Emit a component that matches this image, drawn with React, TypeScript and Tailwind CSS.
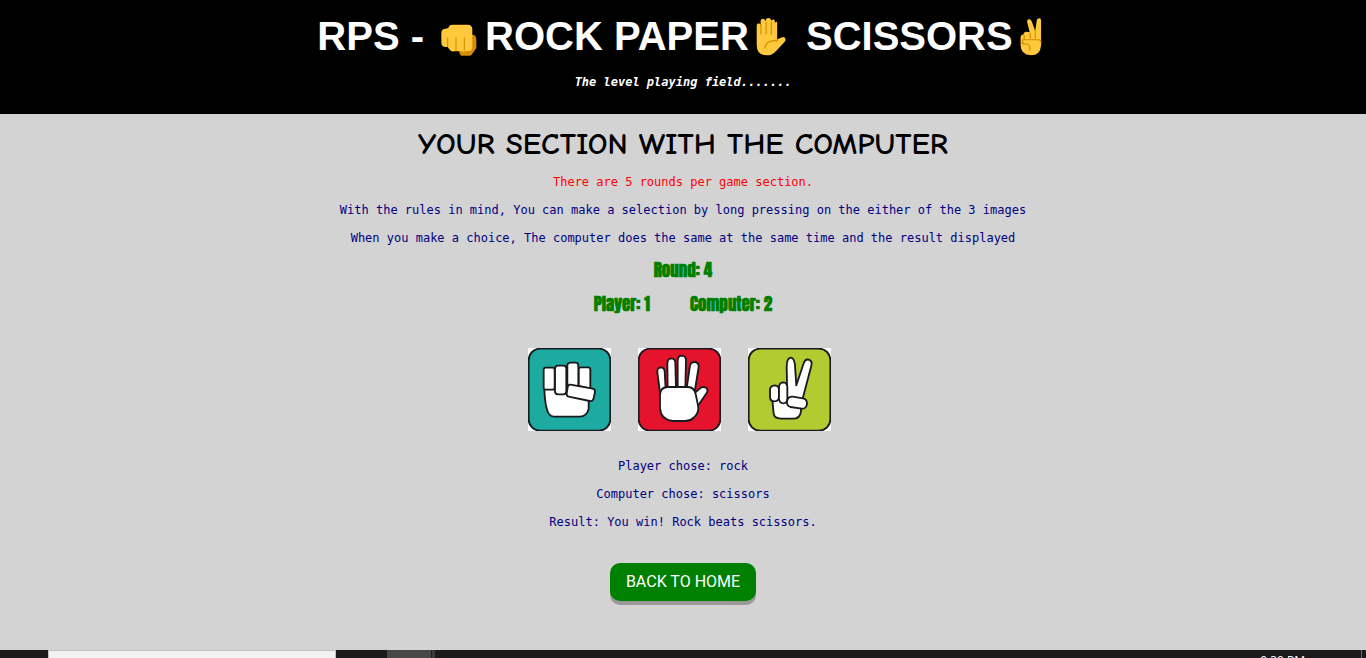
import type { ReactNode } from "react";

function FistEmoji() {
  return (
    <svg viewBox="0 0 108 96" className="mr-2 ml-1.5 inline-block h-8 w-9 align-[-6px]" role="img" aria-label="Fist">
      <path d="M94 32 Q106 32 106 48 V72 L92 92 Q90 95 84 95 H62 Q55 94 55 80 Z" fill="#d48c00" />
      <path d="M22 12 Q24 2 35 2 H80 Q94 2 94 16 V68 Q94 81 84 81 H76 Q70 85 62 82 H40 Q29 84 24 74 L20 69 H14 Q1 68 1 56 V26 Q2 14 14 14 Z" fill="#ffc83d" />
      <path d="M20 40 V69 M45 40 V81 M70 40 V80" stroke="#d48c00" strokeWidth="3" fill="none" />
    </svg>
  );
}

function PalmEmoji() {
  return (
    <svg viewBox="0 0 90 117" className="mr-2 ml-1.5 inline-block h-[38px] w-8 align-[-6px]" role="img" aria-label="Raised hand">
      <path d="M1 24 Q1 16 7 16 Q13 16 13 24 V10 Q13 2 20 2 Q27 2 28 10 Q29 0 37 0 Q45 0 46 10 Q46 4 54 5 Q57 6 57 14 V18 Q58 9 64 12 V66 L77 60 Q85 56 89 63 Q91 69 86 75 L60 102 Q48 115 32 115 Q1 115 1 82 Z" fill="#ffc83d" />
      <path d="M14 20 V51 M30 12 V50 M46 12 V51 M26 94 Q28 68 64 70 V64" stroke="#d48c00" strokeWidth="3.5" fill="none" />
    </svg>
  );
}

function VictoryEmoji() {
  return (
    <svg viewBox="0 0 66 117" className="mx-1.5 inline-block h-[38px] w-6 align-[-6px]" role="img" aria-label="Victory hand">
      <path d="M1 60 Q2 50 10 51 Q10 42 20 42 Q25 42 29 44 L21 12 Q20 5 26 4 Q32 3 35 10 L46 40 L51 6 Q53 0 60 1 Q64 2 64 8 V84 Q62 115 33 115 Q1 113 1 84 Z" fill="#ffc83d" />
      <path d="M31 64 V46 M46 39 V64 M12 52 V66 M8 67 H57 Q64 68 64 76 M8 67 Q3 79 16 80 H23 Q30 82 30 100 M12 80 Q7 81 4 76" stroke="#d48c00" strokeWidth="3.5" fill="none" />
    </svg>
  );
}

function Tile({ label, color, children }: { label: string; color: string; children: ReactNode }) {
  return (
    <button type="button" aria-label={label} className="block cursor-pointer bg-white">
      <svg viewBox="24 24 249 249" className="block size-[83px]" stroke="#171b1e" strokeWidth="5.5" strokeLinejoin="round" strokeLinecap="round">
        <rect x="26" y="26" width="245" height="246" rx="34" fill={color} />
        <g fill="#fff">{children}</g>
      </svg>
    </button>
  );
}

function RockTile() {
  return (
    <Tile label="Rock" color="#1caaa1">
      <path d="M73 145 Q75 205 87 222 Q93 230 102 230 H180 Q200 229 206 207 V150 L142 138 Z" />
      <path d="M176 138 V86 Q177 82 183 82 H204 Q211 82 211 89 V146 Z" />
      <rect x="71" y="83" width="33" height="66" rx="6" />
      <rect x="105" y="77" width="34" height="86" rx="9" />
      <path d="M142 139 V75 Q143 68 151 68 H167 Q175 68 175 76 V139 Z" />
      <path d="M151 134 L218 146 Q226 148 225 156 L220 178 Q217 185 209 183 L146 170 Q139 168 140 160 L143 141 Q145 133 151 134 Z" />
    </Tile>
  );
}

function PaperTile() {
  return (
    <Tile label="Paper" color="#e5142c">
      <path d="M90 158 L82 97 Q81 84 91 82 Q103 82 104 94 L107 148 Z" />
      <path d="M113 145 L112 69 Q113 56 124 55 Q136 56 136 69 L138 145 Z" />
      <path d="M143 145 V61 Q144 47 155 47 Q168 48 168 61 L166 145 Z" />
      <path d="M170 145 L180 76 Q183 65 196 66 Q207 69 206 81 L194 156 Z" />
      <path d="M193 160 L209 146 Q218 138 228 143 Q236 150 230 159 L201 202 Z" />
      <path d="M90 165 Q90 143 112 141 H174 Q193 142 197 162 L204 196 Q209 218 190 234 Q181 243 166 243 H128 Q92 239 90 204 Z" />
    </Tile>
  );
}

function ScissorsTile() {
  return (
    <Tile label="Scissors" color="#b2cb31">
      <path d="M142 180 L140 80 Q140 54 153 53 Q163 54 165 77 L169 136 L191 70 Q196 56 206 59 Q218 63 214 77 L187 180 Z" />
      <path d="M97 180 L101 221 Q102 235 123 236 H157 Q180 237 183 214 V180 L144 171 Z" />
      <path d="M142 138 V177 Q145 185 155 190 L184 180 L181 153 Z" stroke="none" />
      <path d="M90 149 Q91 137 104 136 Q117 137 117 149 V171 Q116 184 104 184 Q91 184 90 172 Z" />
      <path d="M117 142 Q118 127 130 127 Q142 128 142 142 V177 Q141 190 130 190 Q118 189 117 177 Z" />
      <path d="M158 170 L189 175 Q202 178 201 192 Q199 207 185 206 L151 201 Q140 197 141 184 Q144 169 158 170 Z" />
    </Tile>
  );
}

function Taskbar() {
  return (
    <footer className="flex h-2 shrink-0 overflow-hidden bg-[#1a1b1c]">
      <div className="ml-12 h-2 w-72 border border-b-0 border-[#c0c0c0] bg-[#f2f2f2]" />
      <div className="ml-[51px] h-2 w-11 bg-[#484848]" />
      <div className="h-2 w-1 border-l border-[#222222] bg-[#3c3c3c]" />
      <div className="mr-14 ml-auto pt-[3px] font-['Open_Sans',sans-serif] text-xs leading-4 text-white">9:39 PM</div>
      <div className="mr-1 h-2 w-px bg-[#6b6b6b]" />
    </footer>
  );
}

export default function App() {
  return (
    <div className="flex min-h-screen flex-col bg-[#d3d3d3] text-center font-['DejaVu_Sans_Mono',monospace] text-xs text-[#000080]">
      <header className="bg-black pt-3 pb-6 text-white">
        <h1 className="font-['Liberation_Sans',sans-serif] text-[40px] leading-12 font-bold whitespace-nowrap">
          RPS - <FistEmoji />ROCK PAPER<PalmEmoji /> SCISSORS<VictoryEmoji />
        </h1>
        <p className="mt-3.5 leading-4 font-bold italic">The level playing field.......</p>
      </header>
      <main className="flex flex-1 flex-col items-center">
        <h2 className="mt-2 font-['Comic_Neue','Comic_Sans_MS','Open_Sans',sans-serif] text-[31px] leading-11 font-bold text-black">
          YOUR SECTION WITH THE COMPUTER
        </h2>
        <div className="mt-2 flex flex-col gap-3 leading-4">
          <p className="text-[#ff0000]">There are 5 rounds per game section.</p>
          <p>With the rules in mind, You can make a selection by long pressing on the either of the 3 images</p>
          <p>When you make a choice, The computer does the same at the same time and the result displayed</p>
        </div>
        <div className="mt-3.5 flex flex-col gap-3.5 font-['Anton','Impact','Open_Sans',sans-serif] text-[17px] leading-5 font-bold text-[#008000]">
          <p>Round: 4</p>
          <div className="flex justify-center gap-10">
            <p>Player: 1</p>
            <p>Computer: 2</p>
          </div>
        </div>
        <div className="mt-[34px] flex gap-[27px] pr-2">
          <RockTile />
          <PaperTile />
          <ScissorsTile />
        </div>
        <div className="mt-[27px] flex flex-col gap-3 leading-4">
          <p>Player chose: rock</p>
          <p>Computer chose: scissors</p>
          <p>Result: You win! Rock beats scissors.</p>
        </div>
        <a
          href="#home"
          className="mt-[33px] mb-[49px] rounded-[10px] bg-[#008000] px-4 font-['Roboto',sans-serif] text-base leading-[38px] text-white shadow-[0_4px_#999999]"
        >
          BACK TO HOME
        </a>
      </main>
      <Taskbar />
    </div>
  );
}
